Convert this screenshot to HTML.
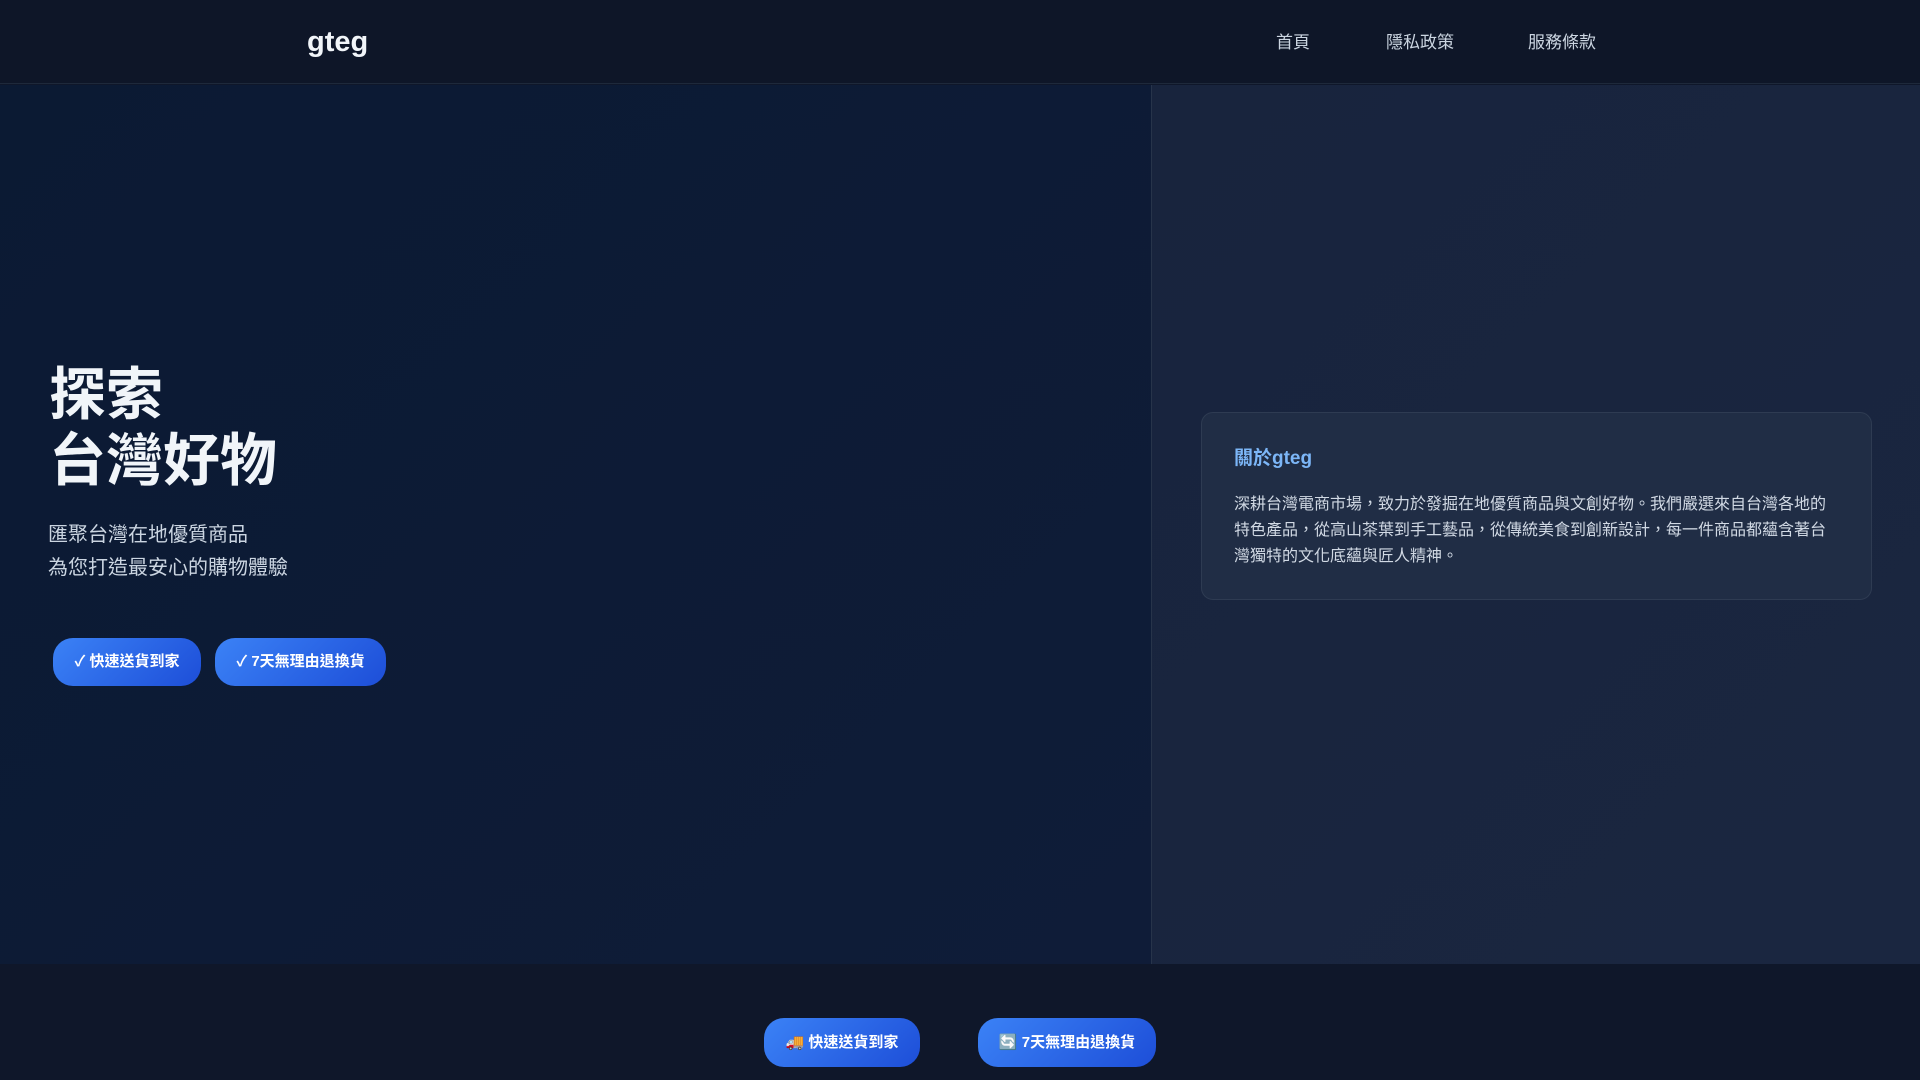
<!DOCTYPE html>
<html><head><meta charset="utf-8"><style>
*{margin:0;padding:0;box-sizing:border-box}
body{width:1920px;height:1080px;overflow:hidden;background:#0f172a;font-family:"Liberation Sans","Noto Sans CJK TC",sans-serif;color:#fff}
header{position:absolute;left:0;top:0;width:1920px;height:84px;background:#0e1628;border-bottom:1px solid #1e293b}
.logo{position:absolute;left:307px;top:26px;font-size:29px;font-weight:bold;color:#f1f5f9}
nav a{position:absolute;top:28px;font-size:17px;color:#cbd5e1;text-decoration:none}
.hero{position:absolute;left:0;top:85px;width:1152px;height:879px;background:linear-gradient(135deg,#0b1a33,#0f1c38)}
.right{position:absolute;left:1151px;top:85px;width:769px;height:879px;background:linear-gradient(135deg,#18243d,#1a2640);border-left:1px solid #27344a}
h1{position:absolute;left:49px;top:362px;font-size:57px;line-height:66px;font-weight:bold;color:#f1f5f9}
.sub{position:absolute;left:48px;top:519px;font-size:20px;line-height:33px;color:#cbd5e1}
.btn{position:absolute;height:48px;border-radius:20px;background:linear-gradient(135deg,#3b82f6,#1d4ed8);color:#fff;font-weight:bold;font-size:15px;display:flex;align-items:center;justify-content:center;padding-bottom:3px}
.card{position:absolute;left:1201px;top:412px;width:671px;height:188px;background:#202d45;border:1px solid #2e3b52;border-radius:12px}
.card h3{position:absolute;left:32px;top:30px;font-size:19px;color:#7cb6f7}
.card p{position:absolute;left:32px;top:79px;width:600px;font-size:16px;line-height:26px;color:#d1d9e4}
footer{position:absolute;left:0;top:964px;width:1920px;height:116px;background:#0f172a}
</style></head><body>
<header><div class="logo">gteg</div>
<nav><a style="left:1276px">首頁</a><a style="left:1386px">隱私政策</a><a style="left:1528px">服務條款</a></nav></header>
<div class="hero">
</div>
<h1>探索<br>台灣好物</h1>
<div class="sub">匯聚台灣在地優質商品<br>為您打造最安心的購物體驗</div>
<div class="btn" style="left:53px;top:638px;width:148px">✓ 快速送貨到家</div>
<div class="btn" style="left:215px;top:638px;width:171px">✓ 7天無理由退換貨</div>
<div class="right"></div>
<div class="card"><h3>關於gteg</h3><p>深耕台灣電商市場，致力於發掘在地優質商品與文創好物。我們嚴選來自台灣各地的特色產品，從高山茶葉到手工藝品，從傳統美食到創新設計，每一件商品都蘊含著台灣獨特的文化底蘊與匠人精神。</p></div>
<footer></footer>
<div class="btn" style="left:764px;top:1018px;width:156px;height:49px;font-size:15px">🚚 快速送貨到家</div>
<div class="btn" style="left:978px;top:1018px;width:178px;height:49px;font-size:15px">🔄 7天無理由退換貨</div>
</body></html>
